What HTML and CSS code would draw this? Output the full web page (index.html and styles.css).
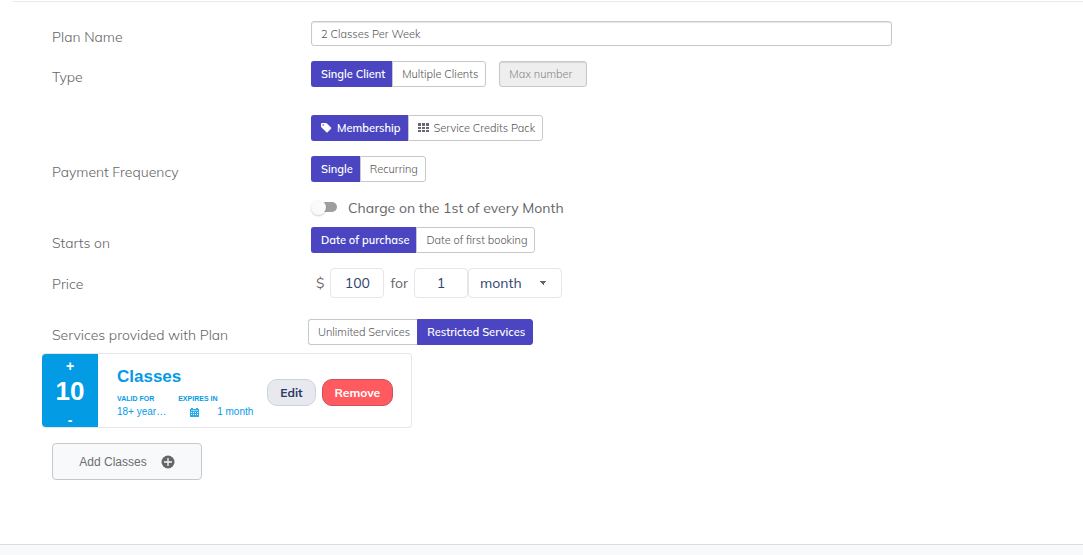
FILE: index.html
```html
<!DOCTYPE html>
<html lang="en">
<head>
    <meta charset="UTF-8">
    <meta name="viewport" content="width=device-width, initial-scale=1.0">
    <title>Edit Plan</title>
    <link rel="stylesheet" href="styles.css">
</head>
<body>
    <main class="panel">
        <hr class="divider">
        <form class="plan-form">
            <div class="row row-name">
                <label class="row-label" for="planName">Plan Name</label>
                <input class="text-input" type="text" id="planName" value="2 Classes Per Week">
            </div>
            <div class="row row-spaced">
                <span class="row-label" id="typeLabel">Type</span>
                <div class="field">
                    <div class="btn-group" role="group" aria-labelledby="typeLabel">
                        <button type="button" class="btn active">Single Client</button>
                        <button type="button" class="btn">Multiple Clients</button>
                    </div>
                    <input class="text-input max-input" type="text" placeholder="Max number" aria-label="Max number" disabled>
                </div>
            </div>
            <div class="row">
                <div class="field field-only">
                    <div class="btn-group" role="group" aria-label="Plan kind">
                        <button type="button" class="btn active">
                            <svg class="icon" viewBox="0 0 12 12" aria-hidden="true"><path fill="currentColor" fill-rule="evenodd" d="M0 2Q0 1 1 1H4.800Q5.500 1 6 1.500L10 5.500Q10.600 6.100 10 6.700L6.600 10.200Q6 10.800 5.400 10.200L.6 5.600Q0 5 0 4.400ZM1.400 3A.8.8 0 1 0 3 3A.8.8 0 1 0 1.400 3Z"/></svg>
                            Membership
                        </button>
                        <button type="button" class="btn">
                            <svg class="icon" viewBox="0 0 12 12" aria-hidden="true"><path fill="#667" d="M0 1h3v3H0zM4 1h3v3H4zM8 1h3v3H8zM0 5h3v2H0zM4 5h3v2H4zM8 5h3v2H8zM0 8h3v2H0zM4 8h3v2H4zM8 8h3v2H8z"/></svg>
                            Service Credits Pack
                        </button>
                    </div>
                </div>
            </div>
            <div class="row">
                <span class="row-label" id="frequencyLabel">Payment Frequency</span>
                <div class="btn-group" role="group" aria-labelledby="frequencyLabel">
                    <button type="button" class="btn active">Single</button>
                    <button type="button" class="btn">Recurring</button>
                </div>
            </div>
            <div class="row row-toggle">
                <label class="toggle">
                    <input class="toggle-input" type="checkbox">
                    Charge on the 1st of every Month
                </label>
            </div>
            <div class="row">
                <span class="row-label" id="startsLabel">Starts on</span>
                <div class="btn-group" role="group" aria-labelledby="startsLabel">
                    <button type="button" class="btn active">Date of purchase</button>
                    <button type="button" class="btn">Date of first booking</button>
                </div>
            </div>
            <div class="row row-price">
                <label class="row-label" for="price">Price</label>
                <div class="price">
                    <span>$</span>
                    <input class="box-input" type="text" id="price" value="100">
                    <label for="duration">for</label>
                    <div class="period">
                        <input class="box-input" type="text" id="duration" value="1">
                        <select class="box-select" aria-label="Period">
                            <option>day</option>
                            <option>week</option>
                            <option selected>month</option>
                            <option>year</option>
                        </select>
                    </div>
                </div>
            </div>
            <div class="row row-services">
                <span class="row-label" id="servicesLabel">Services provided with Plan</span>
                <div class="btn-group" role="group" aria-labelledby="servicesLabel">
                    <button type="button" class="btn">Unlimited Services</button>
                    <button type="button" class="btn active">Restricted Services</button>
                </div>
            </div>

            <div class="service-card">
                <div class="counter">
                    <button type="button" class="counter-btn" aria-label="Increase">+</button>
                    <span class="counter-value">10</span>
                    <button type="button" class="counter-btn" aria-label="Decrease">-</button>
                </div>
                <div class="service-info">
                    <h2 class="service-title">Classes</h2>
                    <div class="service-details">
                        <div class="detail">
                            <span class="detail-name">VALID FOR</span>
                            <span>18+ year…</span>
                        </div>
                        <div class="detail">
                            <span class="detail-name">EXPIRES IN</span>
                            <span class="expires">
                                <svg class="calendar" viewBox="0 0 9 9" aria-hidden="true"><path fill="#049be5" fill-rule="evenodd" d="M0 1h1V0h2v1h3V0h2v1h1v8H0zM1 4v1h1V4zM3 4v1h1V4zM5 4v1h1V4zM7 4v1h1V4zM1 6v1h1V6zM3 6v1h1V6zM5 6v1h1V6zM7 6v1h1V6z" opacity=".85"/><path fill="#9bd7f5" d="M1 2h7v1H1z"/></svg>
                                1 month
                            </span>
                        </div>
                    </div>
                </div>
                <div class="service-actions">
                    <button type="button" class="pill">Edit</button>
                    <button type="button" class="pill pill-danger">Remove</button>
                </div>
            </div>

            <button type="button" class="add-btn">
                Add Classes
                <svg class="plus" viewBox="0 0 14 14" aria-hidden="true"><circle cx="7" cy="7" r="6.500" fill="#666"/><path stroke="#f8f9fb" stroke-width="1.300" d="M7 3v8M3 7h8"/></svg>
            </button>
        </form>
    </main>
</body>
</html>
```
FILE: styles.css
```css
* {
    box-sizing: border-box;
}
body {
    margin: 0;
    background: #f8f9fb;
    color: #666;
    font-family: Muli, Mulish, Lato, sans-serif;
    font-size: 14px;
    font-weight: 300;
    line-height: 20px;
}
button, input, select {
    font-family: inherit;
    font-weight: inherit;
}
button {
    cursor: pointer;
}
.panel {
    background: #fff;
    border-bottom: 1px solid #dcdcdc;
    box-shadow: 0 1px 2px rgba(0, 0, 0, 0.1);
    padding: 1px 0 64px;
}
.divider {
    height: 1px;
    margin: 0 0 0 12px;
    border: none;
    background: #ebebeb;
}
.plan-form {
    padding: 19px 52px 0;
}
.row {
    display: grid;
    grid-template-columns: 259px 1fr;
    align-items: start;
    margin-bottom: 15px;
}
.row-name {
    margin-bottom: 14px;
}
.row-spaced {
    margin-bottom: 28px;
}
.row-label {
    padding-top: 6px;
    color: #666;
}
.field {
    display: flex;
    gap: 13px;
}
.field-only {
    grid-column: 2;
}
.text-input {
    width: 100%;
    max-width: 581px;
    height: 25px;
    padding: 0 9px;
    border: 1px solid #c8c8c8;
    border-radius: 3px;
    background: #fff;
    box-shadow: inset 0 1px 1px rgba(0, 0, 0, 0.1);
    color: #555;
    font-size: 11px;
}
.max-input {
    width: 88px;
    height: 26px;
    background: #eee;
}
.max-input::placeholder {
    color: #888;
}
.btn-group {
    display: flex;
}
.btn {
    display: flex;
    align-items: center;
    gap: 4px;
    height: 26px;
    padding: 0 7px 0 9px;
    border: 1px solid #c8c8c8;
    border-radius: 0;
    background: #fff;
    color: #555;
    font-size: 11px;
    white-space: nowrap;
}
.btn:first-child {
    border-right: none;
    border-radius: 3px 0 0 3px;
}
.btn:last-child {
    border-radius: 0 3px 3px 0;
}
.btn.active {
    border-color: #4b45c1;
    background: #4b45c1;
    color: #fff;
    font-weight: 600;
}
.icon {
    width: 12px;
    height: 12px;
}
.row-toggle {
    margin-bottom: 9px;
}
.toggle {
    grid-column: 2;
    display: flex;
    align-items: center;
    gap: 10px;
    padding-top: 1px;
    font-weight: 400;
}
.toggle-input {
    appearance: none;
    display: flex;
    align-items: center;
    width: 27px;
    height: 18px;
    margin: 0 0 2px;
}
.toggle-input::before {
    content: "";
    width: 20px;
    height: 10px;
    margin-left: 6px;
    border-radius: 5px;
    background: #9e9e9e;
}
.toggle-input::after {
    content: "";
    width: 15px;
    height: 15px;
    margin-left: -26px;
    border-radius: 50%;
    background: #fafafa;
    box-shadow: 0 1px 2px rgba(0, 0, 0, 0.2);
}
.toggle-input:checked::after {
    margin-left: -14px;
}
.row-price {
    margin-bottom: 21px;
}
.price {
    display: flex;
    align-items: center;
    gap: 6px;
    padding-left: 5px;
    height: 30px;
    font-weight: 400;
}
.period {
    display: flex;
}
.box-input, .box-select {
    height: 30px;
    border: 1px solid #e4e6e8;
    border-radius: 4px;
    background-color: #fff;
    color: #32446e;
    font-size: 14px;
}
.box-input {
    width: 54px;
    padding: 0;
    text-align: center;
}
.box-select {
    appearance: none;
    width: 94px;
    padding: 0 11px;
    background-image: linear-gradient(to bottom left, #666 50%, transparent 50%), linear-gradient(to bottom right, #666 50%, transparent 50%);
    background-position: 70px 12px, 74px 12px;
    background-size: 4px 4px;
    background-repeat: no-repeat;
}
.row-services {
    grid-template-columns: 256px 1fr;
    margin-bottom: 8px;
}
.service-card {
    display: flex;
    align-items: center;
    width: fit-content;
    min-width: 370px;
    min-height: 75px;
    margin: 0 0 15px -10px;
    padding-right: 18px;
    border: 1px solid #e4e6e8;
    border-left: none;
    border-radius: 4px;
    color: #049be5;
    font-family: "Liberation Sans", Arial, sans-serif;
    font-weight: 400;
}
.counter {
    align-self: stretch;
    display: flex;
    flex-direction: column;
    align-items: center;
    width: 56px;
    border-radius: 4px 0 0 4px;
    background: #049be5;
    color: #fff;
    font-weight: 700;
}
.counter-btn {
    width: 100%;
    padding: 0;
    border: none;
    background: none;
    color: #fff;
    font-size: 14px;
    line-height: 24px;
}
.counter-btn:last-child {
    margin-top: auto;
    line-height: 14px;
}
.counter-value {
    font-size: 26px;
    line-height: 26px;
}
.service-info {
    flex: 1;
    padding: 5px 0 0 19px;
}
.service-title {
    margin: 0 0 6px;
    font-size: 17px;
    line-height: 20px;
}
.service-details {
    display: flex;
    gap: 12px;
    font-size: 10px;
    line-height: 14px;
}
.detail {
    display: flex;
    flex-direction: column;
}
.detail-name {
    font-size: 7px;
    font-weight: 700;
    line-height: 12px;
}
.expires {
    display: flex;
    align-items: center;
    gap: 18px;
    padding-left: 12px;
}
.calendar {
    width: 9px;
    height: 9px;
}
.service-actions {
    display: flex;
    gap: 6px;
    padding-top: 3px;
    padding-left: 14px;
}
.pill {
    height: 27px;
    padding: 0 12px;
    border: 1px solid #cdd3de;
    border-radius: 10px;
    background: #e8e9ef;
    color: #293b66;
    font-family: Muli, Mulish, Lato, sans-serif;
    font-size: 12px;
    font-weight: 700;
}
.pill-danger {
    border-color: #c9505c;
    background: #ff5a60;
    color: #fff;
}
.add-btn {
    display: flex;
    align-items: center;
    justify-content: center;
    gap: 14px;
    min-width: 150px;
    height: 37px;
    padding: 0 26px;
    border: 1px solid #c8c8c8;
    border-radius: 4px;
    background: #f8f9fb;
    color: #6e6e6e;
    font-family: "Liberation Sans", Arial, sans-serif;
    font-size: 12px;
    font-weight: 400;
}
.plus {
    width: 14px;
    height: 14px;
}
```
